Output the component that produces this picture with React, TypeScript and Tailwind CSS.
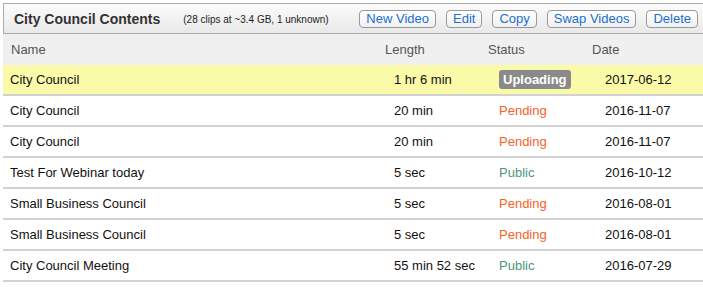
const rows = [
  { name: "City Council", length: "1 hr 6 min", status: "Uploading", date: "2017-06-12" },
  { name: "City Council", length: "20 min", status: "Pending", date: "2016-11-07" },
  { name: "City Council", length: "20 min", status: "Pending", date: "2016-11-07" },
  { name: "Test For Webinar today", length: "5 sec", status: "Public", date: "2016-10-12" },
  { name: "Small Business Council", length: "5 sec", status: "Pending", date: "2016-08-01" },
  { name: "Small Business Council", length: "5 sec", status: "Pending", date: "2016-08-01" },
  { name: "City Council Meeting", length: "55 min 52 sec", status: "Public", date: "2016-07-29" },
]

const buttons = ["New Video", "Edit", "Copy", "Swap Videos", "Delete"]

function Status({ status }: { status: string }) {
  if (status === "Uploading") {
    return (
      <span className="inline-block rounded-[3px] bg-[#8a8a8a] px-[4px] leading-[19px] font-bold text-white">
        Uploading
      </span>
    )
  }
  if (status === "Pending") return <span className="text-[#f5622a]">Pending</span>
  return <span className="text-[#4b9677]">Public</span>
}

export default function App() {
  return (
    <div className="w-[703px] h-[287px] bg-white font-['Liberation_Sans',Arial,sans-serif] text-[13px] text-[#111]">
      <div className="pt-[3px]">
        <div className="ml-[3px] flex h-[31px] items-center border-t border-b border-l border-[#aaa] bg-gradient-to-b from-[#fbfbfb] to-[#e9e9e9]">
          <div className="pl-[10px] pt-[1px] text-[14px] font-bold text-[#333]">City Council Contents</div>
          <div className="ml-[23px] pt-[1px] text-[10px] text-[#222]">(28 clips at ~3.4 GB, 1 unknown)</div>
          <div className="ml-auto mr-[5px] flex gap-[10px]">
            {buttons.map(b => (
              <button
                key={b}
                className="h-[18px] rounded-[4px] border border-[#999] bg-gradient-to-b from-white to-[#f0f0f0] px-[6px] text-[13px] leading-[16px] text-[#1b6fd0]"
              >
                {b}
              </button>
            ))}
          </div>
        </div>
        <div className="ml-[3px] grid h-[31px] grid-cols-[381px_104px_104px_1fr] items-center bg-[#f0f0f0] text-[#555]">
          <div className="pl-[8px]">Name</div>
          <div className="pl-[1px]">Length</div>
          <div>Status</div>
          <div className="pl-[0px]">Date</div>
        </div>
        {rows.map((r, i) => (
          <div
            key={i}
            className={
              "ml-[3px] grid h-[31px] grid-cols-[381px_104px_104px_1fr] items-center border-b-2 border-[#d2d2d2] " +
              (i === 0 ? "bg-[#fafaa9]" : "bg-white")
            }
          >
            <div className="pl-[7px]">{r.name}</div>
            <div className="pl-[10px]">{r.length}</div>
            <div className="pl-[11px]"><Status status={r.status} /></div>
            <div className="pl-[13px]">{r.date}</div>
          </div>
        ))}
      </div>
    </div>
  )
}
